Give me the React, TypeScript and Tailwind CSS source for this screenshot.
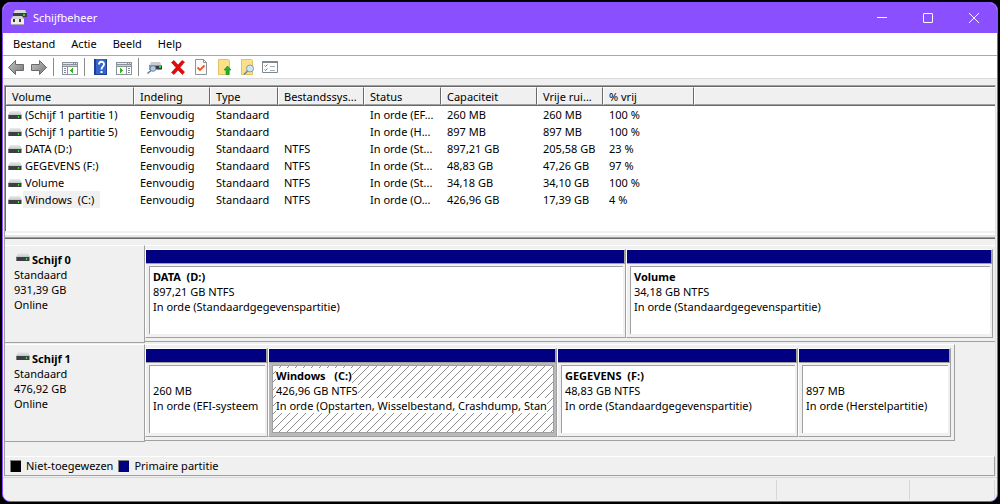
import type { ReactNode } from 'react';

const columns = [
  { label: 'Volume', width: 'w-[128px]' },
  { label: 'Indeling', width: 'w-[76px]' },
  { label: 'Type', width: 'w-[68px]' },
  { label: 'Bestandssys...', width: 'w-[86px]' },
  { label: 'Status', width: 'w-[77px]' },
  { label: 'Capaciteit', width: 'w-[96px]' },
  { label: 'Vrije rui...', width: 'w-[66px]' },
  { label: '% vrij', width: 'w-[91px]' },
];

const volumes = [
  ['(Schijf 1 partitie 1)', 'Eenvoudig', 'Standaard', '', 'In orde (EF...', '260 MB', '260 MB', '100 %'],
  ['(Schijf 1 partitie 5)', 'Eenvoudig', 'Standaard', '', 'In orde (H...', '897 MB', '897 MB', '100 %'],
  ['DATA (D:)', 'Eenvoudig', 'Standaard', 'NTFS', 'In orde (St...', '897,21 GB', '205,58 GB', '23 %'],
  ['GEGEVENS (F:)', 'Eenvoudig', 'Standaard', 'NTFS', 'In orde (St...', '48,83 GB', '47,26 GB', '97 %'],
  ['Volume', 'Eenvoudig', 'Standaard', 'NTFS', 'In orde (St...', '34,18 GB', '34,10 GB', '100 %'],
  ['Windows  (C:)', 'Eenvoudig', 'Standaard', 'NTFS', 'In orde (O...', '426,96 GB', '17,39 GB', '4 %'],
];

const DriveIcon = () => (
  <svg width="14" height="10" viewBox="0 0 14 10" className="shrink-0" shapeRendering="crispEdges" aria-hidden="true">
    <path d="M2 1h10v1H2z" fill="#e6e7ea" />
    <path d="M1 2h12v1H1z" fill="#dcdee1" />
    <path d="M1 3h12v1H1z" fill="#d2d4d8" />
    <path d="M0 4h14v1H0z" fill="#c6c9cd" />
    <path d="M0 5h13v4H0z" fill="#3c3f42" />
    <path d="M13 5h1v4h-1z" fill="#9a9da0" />
    <path d="M0 5h1v4H0z" fill="#77797c" />
    <path d="M9 6h3v2H9z" fill="#1c6a24" />
    <path d="M10 6h1v2h-1z" fill="#2bea2b" />
  </svg>
);

const AppIcon = () => (
  <svg width="16" height="16" viewBox="0 0 16 16" aria-hidden="true">
    <path d="M4 0h10l2 4H2z" fill="#d9dadd" />
    <path d="M2 3h14v4H2z" fill="#3b4043" />
    <path d="M12 4h2v2h-2z" fill="#29d840" />
    <path d="M2 6h9l2 3v6H0V9z" fill="#d4d3cf" />
    <path d="M0 9h13v6H0z" fill="#eeede9" />
    <path d="M2 9h2v3H2zM8 9h2v3H8z" fill="#35383a" />
    <path d="M0 14h13v1H0z" fill="#a9a8a4" />
  </svg>
);

const ArrowIcon = ({ flip = false }: { flip?: boolean }) => (
  <svg width="16" height="16" viewBox="0 0 16 16" aria-hidden="true">
    <defs>
      <linearGradient id={flip ? 'arrowR' : 'arrowL'} x1="0" y1="0" x2="1" y2="1">
        <stop offset="0" stopColor="#c4c4c4" />
        <stop offset="1" stopColor="#777777" />
      </linearGradient>
    </defs>
    <path
      d={flip ? 'M15.5 8.500 8.500 1.500v4h-8v6h8v4z' : 'M.5 8.500l7-7v4h8v6h-8v4z'}
      fill={flip ? 'url(#arrowR)' : 'url(#arrowL)'}
      stroke="#6a6a6a"
    />
  </svg>
);

const PaneIcon = ({ right = false }: { right?: boolean }) => (
  <svg width="16" height="16" viewBox="0 0 16 16" shapeRendering="crispEdges" aria-hidden="true">
    <path d="M0 3h16v13H0z" fill="#8a939b" />
    <path d="M1 4h10v1H1zM12 4h1v1h-1zM14 4h1v1h-1z" fill="#e4e9ed" />
    <path d="M1 6h14v1H1z" fill="#c6d0d8" />
    <path d="M1 8h14v7H1z" fill="#ffffff" />
    <path d={right ? 'M10 8h1v7h-1z' : 'M5 8h1v7H5z'} fill="#8a939b" />
    <path d={right ? 'M12 9h2v1h-2zM12 11h2v1h-2zM12 13h2v1h-2z' : 'M2 9h2v1H2zM2 11h2v1H2zM2 13h2v1H2z'} fill="#7d8a96" />
    <path d={right ? 'M4 9h1v1h1v1h1v1H6v1H5v1H4z' : 'M10 9h1v5h-1v-1H9v-1H8v-1h1v-1h1z'} fill="#2fb51d" />
  </svg>
);

const HelpIcon = () => (
  <svg width="16" height="16" viewBox="0 0 16 16" aria-hidden="true">
    <path d="M1 0h13v16H1z" fill="#3465cb" />
    <path d="M1 0h2v16H1z" fill="#1d3f96" />
    <path d="M13 0h1v16h-1zM1 15h13v1H1z" fill="#1d3f96" />
    <path d="M6 5.500C6 1.900 11 1.900 11 5.200 11 7.500 8.500 7.500 8.500 10.500" fill="none" stroke="#fff" strokeWidth="1.800" />
    <path d="M7.500 12h2v2h-2z" fill="#fff" />
  </svg>
);

const DiskSearchIcon = () => (
  <svg width="16" height="16" viewBox="0 0 16 16" aria-hidden="true">
    <path d="M4 3h9l2 4H2z" fill="#c9ccd0" />
    <path d="M2 6h13v5H2z" fill="#8f969b" />
    <path d="M8 7h7v3H8z" fill="#35393c" />
    <path d="M12 7h2v2h-2z" fill="#24dc35" />
    <circle cx="6" cy="9.500" r="2.800" fill="#a9cde9" stroke="#6d8ba6" />
    <path d="M4 11.500l-3.500 3" stroke="#607587" strokeWidth="1.500" />
  </svg>
);

const DeleteIcon = () => (
  <svg width="16" height="16" viewBox="0 0 16 16" aria-hidden="true">
    <path
      d="M1.500 3.500 4 1.500 8 6l4-4.500 2.500 1.500-4.500 5.500 4.500 4.500-2 2.500-4.500-4.500-4 4.500-2.500-2 4.500-5z"
      fill="#e00b0b"
      stroke="#b80000"
      strokeWidth=".6"
    />
  </svg>
);

const CheckDocIcon = () => (
  <svg width="16" height="16" viewBox="0 0 16 16" aria-hidden="true">
    <path d="M2.500.5h8l3 3v12h-11z" fill="#fbfbfb" stroke="#8d9299" />
    <path d="M10.500.5v3h3" fill="none" stroke="#8d9299" />
    <path d="M4.500 8.500l2.500 2.500 4.500-4.500" fill="none" stroke="#ee5523" strokeWidth="1.800" />
  </svg>
);

const FolderUpIcon = () => (
  <svg width="16" height="16" viewBox="0 0 16 16" aria-hidden="true">
    <path d="M2.500.5h10l1 1v14h-11z" fill="#fbe08a" stroke="#e3c260" />
    <path d="M11.500 7l3.500 4h-2v4.500h-3V11H8z" fill="#23b32a" stroke="#138a1b" strokeWidth=".6" />
  </svg>
);

const FolderSearchIcon = () => (
  <svg width="16" height="16" viewBox="0 0 16 16" aria-hidden="true">
    <path d="M2.500.5h10l1 1v14h-11z" fill="#fbe08a" stroke="#e3c260" />
    <circle cx="11" cy="9.500" r="3.500" fill="#cfe6f6" stroke="#7f9db5" />
    <path d="M8.500 12l-3.500 3.500" stroke="#70889b" strokeWidth="1.600" />
  </svg>
);

const OptionsIcon = () => (
  <svg width="16" height="16" viewBox="0 0 16 16" aria-hidden="true">
    <path d="M.5 2.500h15v11H.5z" fill="#fdfdfd" stroke="#7e8890" />
    <path d="M0 2h16v2H0z" fill="#7e8890" />
    <path d="M2.500 6.500l1 1 2-2M2.500 10.500l1 1 2-2" fill="none" stroke="#3a86d8" />
    <path d="M8 7.500h5M8 11.500h5" stroke="#a5afb7" />
  </svg>
);

const ToolButton = ({ label, children }: { label: string; children: ReactNode }) => (
  <button type="button" aria-label={label} className="w-[23px] pl-[3px] pr-1 h-[22px] flex items-center">
    {children}
  </button>
);

const ToolSeparator = () => <div className="w-px h-[18px] ml-[2px] mr-[5px] bg-[#8c8c8c]" />;

type PartitionProps = {
  name: string;
  size: string;
  status: string;
  selected?: boolean;
};

const Partition = ({ name, size, status, selected = false }: PartitionProps) => (
  <div className="min-w-0 flex flex-col border-l border-white border-b border-b-[#a0a0a0]">
    <div className="h-[15px] bg-[#000080] border-t border-t-white border-b border-b-[#a0a0a0] border-r-2 border-r-[#a0a0a0]" />
    <div className={`h-[73px] pl-[3px] pr-[2px] pt-[2px] pb-[3px] border-r border-[#a0a0a0] ${selected ? 'bg-[#b9b9b9]' : 'bg-[#f0f0f0]'}`}>
      <div className={`relative h-full overflow-hidden bg-white border-[#a0a0a0] pl-[3px] pt-[2px] ${selected ? 'border' : 'border-t border-l'}`}>
        {selected && (
          <svg className="absolute inset-0 w-full h-full" shapeRendering="crispEdges" aria-hidden="true">
            <defs>
              <pattern id="hatch" width="8" height="8" patternUnits="userSpaceOnUse">
                <path d="M-1 9 9-1" stroke="#8c8c8c" strokeWidth="1" />
              </pattern>
            </defs>
            <rect width="100%" height="100%" fill="url(#hatch)" />
          </svg>
        )}
        <div className="relative whitespace-pre leading-[15px]">
          <div className="h-[15px] font-bold"><span className="bg-white">{name}</span></div>
          <div><span className="bg-white">{size}</span></div>
          <div><span className="bg-white">{status}</span></div>
        </div>
      </div>
    </div>
  </div>
);

const Disk = ({ name, size, children }: { name: string; size: string; children: ReactNode }) => (
  <section className="flex h-[99px]">
    <div className="w-[140px] shrink-0 h-[98px] border-t border-t-white border-b border-b-[#a0a0a0] border-r border-r-[#a0a0a0] pt-[6px] pl-[9px] leading-[15px]">
      <h2 className="flex font-bold pl-[2px] gap-[2px]">
        <DriveIcon />
        {name}
      </h2>
      <p>Standaard</p>
      <p>{size}</p>
      <p>Online</p>
    </div>
    {children}
  </section>
);

const App = () => {
  return (
    <div className="min-h-screen flex bg-black p-[2px] font-['Noto_Sans','Open_Sans',sans-serif] text-[11px] text-black">
      <div className="flex-1 min-w-0 flex flex-col bg-[#f0f0f0] border border-[#8a4fff] rounded-lg overflow-hidden">
        <header className="h-[30px] flex items-center bg-[#8a4fff] text-white pl-2">
          <AppIcon />
          <h1 className="flex-1 pl-[6px]">Schijfbeheer</h1>
          <button type="button" aria-label="Minimaliseren" className="w-[46px] h-full grid place-items-center">
            <svg width="10" height="10" viewBox="0 0 10 10"><path d="M0 4.500h10" stroke="#fff" /></svg>
          </button>
          <button type="button" aria-label="Maximaliseren" className="w-[46px] h-full grid place-items-center">
            <svg width="10" height="10" viewBox="0 0 10 10"><rect x=".5" y=".5" width="9" height="9" rx=".5" fill="none" stroke="#fff" /></svg>
          </button>
          <button type="button" aria-label="Sluiten" className="w-[46px] h-full grid place-items-center">
            <svg width="10" height="10" viewBox="0 0 10 10"><path d="M0 0l10 10M10 0 0 10" stroke="#fff" /></svg>
          </button>
        </header>

        <nav className="h-[23px] flex items-center gap-4 pl-[10px] bg-white border-b border-[#a9a9ad]">
          <button type="button">Bestand</button>
          <button type="button">Actie</button>
          <button type="button">Beeld</button>
          <button type="button">Help</button>
        </nav>

        <div className="h-[23px] flex items-center pl-[2px] bg-white border-b border-[#d9d9d9]">
          <ToolButton label="Vorige"><ArrowIcon /></ToolButton>
          <ToolButton label="Volgende"><ArrowIcon flip /></ToolButton>
          <ToolSeparator />
          <ToolButton label="Consolestructuur"><PaneIcon /></ToolButton>
          <ToolSeparator />
          <ToolButton label="Help"><HelpIcon /></ToolButton>
          <ToolButton label="Actievenster"><PaneIcon right /></ToolButton>
          <ToolSeparator />
          <ToolButton label="Schijven opnieuw scannen"><DiskSearchIcon /></ToolButton>
          <ToolButton label="Verwijderen"><DeleteIcon /></ToolButton>
          <ToolButton label="Eigenschappen"><CheckDocIcon /></ToolButton>
          <ToolButton label="Omhoog"><FolderUpIcon /></ToolButton>
          <ToolButton label="Zoeken"><FolderSearchIcon /></ToolButton>
          <ToolButton label="Opties"><OptionsIcon /></ToolButton>
        </div>

        <main className="flex-1 flex flex-col mt-[6px] mx-px border-l border-t border-[#a0a0a0] border-r border-r-[#e3e3e3]">
          <div className="bg-white border-t border-l border-[#696969] pb-[23px]">
            <table className="w-full table-fixed border-separate border-spacing-0 text-left whitespace-pre">
              <thead>
                <tr className="h-[19px] bg-[#f0f0f0]">
                  {columns.map((col) => (
                    <th key={col.label} scope="col" className={`${col.width} p-0 font-normal border-b border-[#696969]`}>
                      <div className="h-[18px] leading-[17px] pl-[5px] border-t border-l border-white border-r border-r-[#696969] border-b border-b-[#a0a0a0]">
                        {col.label}
                      </div>
                    </th>
                  ))}
                  <td className="p-0 border-b border-[#696969]">
                    <div className="h-[18px] border-t border-l border-white border-b border-b-[#a0a0a0]" />
                  </td>
                </tr>
              </thead>
              <tbody>
                {volumes.map((row, i) => (
                  <tr key={row[0]} className="h-[17px] leading-[17px]">
                    <th scope="row" className="p-0 pl-[2px] font-normal">
                      <div className="flex items-center gap-px">
                        <DriveIcon />
                        <span className={i === 5 ? 'bg-[#f0f0f0] pl-[2px] pr-[6px]' : 'pl-[2px]'}>{row[0]}</span>
                      </div>
                    </th>
                    {row.slice(1).map((cell, j) => (
                      <td key={j} className="p-0 pl-[6px]">{cell}</td>
                    ))}
                    <td className="p-0" />
                  </tr>
                ))}
              </tbody>
            </table>
          </div>

          <div className="h-[8px] border-b border-[#696969] pt-[2px]">
            <div className="h-[5px] border-t-2 border-t-white border-b border-b-[#a0a0a0] bg-[#e6e6e6]" />
          </div>

          <div className="flex-1 pt-[6px]">
            <Disk name="Schijf 0" size="931,39 GB">
              <div className="flex-1 min-w-0 h-[97px] border-t border-t-white border-b border-b-[#a0a0a0] pt-[3px] pr-[2px]">
                <div className="grid grid-cols-[minmax(0,481fr)_minmax(0,367fr)]">
                  <Partition name="DATA  (D:)" size="897,21 GB NTFS" status="In orde (Standaardgegevenspartitie)" />
                  <Partition name="Volume" size="34,18 GB NTFS" status="In orde (Standaardgegevenspartitie)" />
                </div>
              </div>
            </Disk>
            <Disk name="Schijf 1" size="476,92 GB">
              <div className="flex-1 min-w-0 mr-10 h-[97px] border-t border-t-white border-b border-b-[#a0a0a0] border-r border-r-[#a0a0a0] pt-[3px] pr-[3px]">
                <div className="grid grid-cols-[minmax(0,123fr)_minmax(0,289fr)_minmax(0,241fr)_minmax(0,153fr)]">
                  <Partition name="" size="260 MB" status="In orde (EFI-systeem" />
                  <Partition name="Windows   (C:)" size="426,96 GB NTFS" status="In orde (Opstarten, Wisselbestand, Crashdump, Stan" selected />
                  <Partition name="GEGEVENS  (F:)" size="48,83 GB NTFS" status="In orde (Standaardgegevenspartitie)" />
                  <Partition name="" size="897 MB" status="In orde (Herstelpartitie)" />
                </div>
              </div>
            </Disk>
          </div>

          <div className="h-5 flex items-center pl-[5px] border-t border-t-white border-b border-b-[#a0a0a0] border-r border-r-[#a0a0a0]">
            <span className="w-[11px] h-3 bg-black border-t border-l border-[#808080]" />
            <span className="pl-[5px] pr-[5px]">Niet-toegewezen</span>
            <span className="w-[11px] h-3 bg-[#000080] border-t border-l border-[#808080]" />
            <span className="pl-[5px]">Primaire partitie</span>
          </div>
        </main>

        <footer className="h-6 mt-px pt-[2px] flex justify-end border-t border-[#d7d7d7]">
          <div className="w-[133px] h-5 border-l border-[#d7d7d7]" />
          <div className="w-[86px] h-5 mr-[2px] border-l border-r border-[#d7d7d7]" />
        </footer>
      </div>
    </div>
  );
};

export default App;
